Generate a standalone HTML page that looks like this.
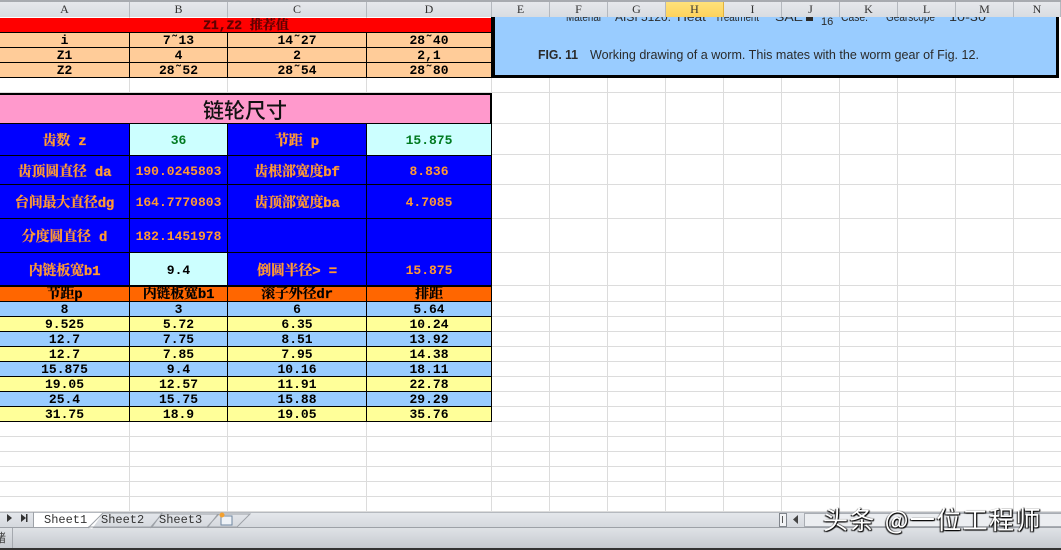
<!DOCTYPE html>
<html><head><meta charset="utf-8"><style>
html,body{margin:0;padding:0;background:#fff;width:1061px;height:550px;overflow:hidden}
body{position:relative;font-family:"Liberation Mono","Noto Serif CJK SC",monospace;font-weight:bold;font-size:13px;color:#000}
.a{position:absolute}
.h{position:absolute;top:2px;height:15px;line-height:15px;background:linear-gradient(#e6e8ec,#d9dce1);border-right:1px solid #b4b8be;text-align:center;font-weight:normal;font-size:12px;color:#333;font-family:"Liberation Serif",serif;box-sizing:border-box}
.r{position:absolute;left:0;width:492px;display:grid;grid-template-columns:130px 98px 139px 125px}
.r>div{box-sizing:border-box;border-right:1px solid #000;border-bottom:1px solid #000;text-align:center;white-space:nowrap;overflow:hidden}
.s{height:15px;line-height:15px;grid-template-rows:15px}
.o>div{background:#ffcc99}.u>div{background:#99ccff}.y>div{background:#ffff99}
.d>div{background:#ff6600;line-height:17px;font-size:14px;letter-spacing:-.2px;-webkit-text-stroke:.2px #000}
.b>div{background:#0000ff;color:#ff9933;display:flex;align-items:center;justify-content:center;padding-top:2px}
.b>div.c{font-size:14px;letter-spacing:-.2px;-webkit-text-stroke:.3px #ff9933;padding-top:1px}
.b>div.l{background:#ccffff;color:#000}
.b>div.g{color:#007a20}
.tab{position:absolute;top:514px;font-weight:normal;font-size:12px;color:#333;line-height:13px}
</style></head><body>
<div class="a" style="left:0;top:0;width:1061px;height:2px;background:#a8abb0"></div>
<div class="h" style="left:0;width:130px">A</div>
<div class="h" style="left:130px;width:98px">B</div>
<div class="h" style="left:228px;width:139px">C</div>
<div class="h" style="left:367px;width:125px">D</div>
<div class="h" style="left:492px;width:58px">E</div>
<div class="h" style="left:550px;width:58px">F</div>
<div class="h" style="left:608px;width:58px">G</div>
<div class="h" style="left:666px;width:58px;background:linear-gradient(#ffe27a,#fdd25c);border-right:1px solid #e2b23c">H</div>
<div class="h" style="left:724px;width:58px">I</div>
<div class="h" style="left:782px;width:58px">J</div>
<div class="h" style="left:840px;width:58px">K</div>
<div class="h" style="left:898px;width:58px">L</div>
<div class="h" style="left:956px;width:58px">M</div>
<div class="h" style="left:1014px;width:47px">N</div>

<svg class="a" style="left:0;top:17px" width="1061" height="496">
<g stroke="#dcdcdc" stroke-width="1" shape-rendering="crispEdges">
<path d="M129.500 0V496M227.500 0V496M366.500 0V496M491.500 0V496M549.500 0V496M607.500 0V496M665.500 0V496M723.500 0V496M781.500 0V496M839.500 0V496M897.500 0V496M955.500 0V496M1013.500 0V496"/>
<path d="M0 75.500H1061M0 106.500H1061M0 137.500H1061M0 167.500H1061M0 201.500H1061M0 235.500H1061M0 268.500H1061M0 284.500H1061M0 299.500H1061M0 314.500H1061M0 329.500H1061M0 344.500H1061M0 359.500H1061M0 374.500H1061M0 389.500H1061M0 404.500H1061M0 419.500H1061M0 434.500H1061M0 449.500H1061M0 464.500H1061M0 479.500H1061M0 494.500H1061"/>
</g></svg>

<div class="a" style="left:0;top:18px;width:492px;height:15px;overflow:hidden;background:#ff0000;line-height:16px;text-align:center;color:#600000;border-bottom:1px solid #000;box-sizing:border-box;-webkit-text-stroke:.3px #600000">Z1,Z2 推荐值</div>
<div class="r s o" style="top:33px"><div>i</div><div>7˜13</div><div>14˜27</div><div>28˜40</div></div>
<div class="r s o" style="top:48px"><div>Z1</div><div>4</div><div>2</div><div>2,1</div></div>
<div class="r s o" style="top:63px"><div>Z2</div><div>28˜52</div><div>28˜54</div><div>28˜80</div></div>

<div class="a" style="left:491px;top:17px;width:568px;height:61px;background:#99ccff;border:solid #000;border-width:0 3px 3px 4px;box-sizing:border-box"></div>
<svg class="a" style="left:495px;top:17px" width="561" height="58">
<g font-family="Liberation Sans,sans-serif" fill="#2a2a2a" font-weight="normal" font-size="12" style="filter:blur(.3px)" lengthAdjust="spacingAndGlyphs">
<text x="71" y="4" textLength="35" lengthAdjust="spacingAndGlyphs">Material</text>
<text x="120" y="4" textLength="56" lengthAdjust="spacingAndGlyphs">AISI 5120.</text>
<text x="182" y="4" textLength="29" lengthAdjust="spacingAndGlyphs">Heat</text>
<text x="220" y="4" textLength="44" lengthAdjust="spacingAndGlyphs">Treatment</text>
<text x="280" y="4" textLength="28" lengthAdjust="spacingAndGlyphs">SAE</text>
<rect x="311" y="0" width="7" height="4" fill="#2a2a2a"/>
<text x="326" y="8" font-size="11">16</text>
<text x="346" y="4" textLength="27" lengthAdjust="spacingAndGlyphs">Case:</text>
<text x="391" y="4" textLength="49" lengthAdjust="spacingAndGlyphs">Gearscope</text>
<text x="454" y="4" textLength="37" lengthAdjust="spacingAndGlyphs">10-30</text>
<text x="43" y="42" font-size="12.500" font-weight="bold" textLength="40" lengthAdjust="spacingAndGlyphs">FIG. 11</text>
<text x="95" y="42" font-size="13" textLength="389" lengthAdjust="spacingAndGlyphs">Working drawing of a worm. This mates with the worm gear of Fig. 12.</text>
</g></svg>

<div class="a" style="left:0;top:93px;width:492px;height:31px;background:#ff99cc;border-top:2px solid #000;border-right:2px solid #000;border-bottom:1px solid #000;box-sizing:border-box;text-align:center;font-size:21px;line-height:30px;color:#111;font-family:'Noto Sans CJK SC',sans-serif;font-weight:500">链轮尺寸</div>

<div class="r b" style="top:124px;height:32px"><div class="c">齿数 z</div><div class="l g">36</div><div class="c">节距 p</div><div class="l g">15.875</div></div>
<div class="r b" style="top:156px;height:29px"><div class="c">齿顶圆直径 da</div><div>190.0245803</div><div class="c">齿根部宽度bf</div><div>8.836</div></div>
<div class="r b" style="top:185px;height:34px"><div class="c">台间最大直径dg</div><div>164.7770803</div><div class="c">齿顶部宽度ba</div><div>4.7085</div></div>
<div class="r b" style="top:219px;height:34px"><div class="c">分度圆直径 d</div><div>182.1451978</div><div></div><div></div></div>
<div class="r b" style="top:253px;height:33px;border-bottom:1px solid #000"><div class="c">内链板宽b1</div><div class="l">9.4</div><div class="c">倒圆半径&gt; =</div><div>15.875</div></div>

<div class="r s d" style="top:287px"><div>节距p</div><div>内链板宽b1</div><div>滚子外径dr</div><div>排距</div></div>
<div class="r s u" style="top:302px"><div>8</div><div>3</div><div>6</div><div>5.64</div></div>
<div class="r s y" style="top:317px"><div>9.525</div><div>5.72</div><div>6.35</div><div>10.24</div></div>
<div class="r s u" style="top:332px"><div>12.7</div><div>7.75</div><div>8.51</div><div>13.92</div></div>
<div class="r s y" style="top:347px"><div>12.7</div><div>7.85</div><div>7.95</div><div>14.38</div></div>
<div class="r s u" style="top:362px"><div>15.875</div><div>9.4</div><div>10.16</div><div>18.11</div></div>
<div class="r s y" style="top:377px"><div>19.05</div><div>12.57</div><div>11.91</div><div>22.78</div></div>
<div class="r s u" style="top:392px"><div>25.4</div><div>15.75</div><div>15.88</div><div>29.29</div></div>
<div class="r s y" style="top:407px"><div>31.75</div><div>18.9</div><div>19.05</div><div>35.76</div></div>

<div class="a" style="left:0;top:512px;width:1061px;height:16px;background:linear-gradient(#e4e7eb,#d5d9de);border-top:1px solid #b5b9bf;border-bottom:1px solid #9da1a7;box-sizing:border-box"></div>
<div class="a" style="left:0;top:528px;width:1061px;height:20px;background:linear-gradient(#dfe2e6,#c6cad0)"></div>
<div class="a" style="left:0;top:548px;width:1061px;height:2px;background:#333"></div>
<div class="a" style="left:12px;top:528px;width:1px;height:20px;background:#a5a9af"></div>
<div class="a" style="left:-6px;top:531px;font-size:12px;font-weight:normal;color:#444;line-height:14px;font-family:'Noto Sans CJK SC',sans-serif">绪</div>

<svg class="a" style="left:0;top:512px" width="260" height="17">
<path d="M33.500 1V15H88L92 17L103 1Z" fill="#fff" stroke="none"/>
<path d="M33.500 0V15M88 16L103 1H162L152 15H88M150 16L162 2H219L207 15H150M207 16L218 2H250L237 15H207" fill="none" stroke="#9da1a7"/>
<path d="M7 2L12 6L7 10ZM21 2L26 6L21 10Z" fill="#333"/><rect x="26" y="2" width="1.500" height="8" fill="#333"/>
<rect x="221" y="4" width="11" height="9" fill="#eef2f7" stroke="#6f86a0"/>
<circle cx="222" cy="3" r="2.500" fill="#f2a030"/>
</svg>
<div class="tab" style="left:44px">Sheet1</div>
<div class="tab" style="left:101px">Sheet2</div>
<div class="tab" style="left:159px">Sheet3</div>

<svg class="a" style="left:778px;top:512px" width="283" height="16">
<rect x="1.500" y="1.500" width="7" height="13" fill="#f2f3f5" stroke="#80858c"/>
<path d="M4.500 4V11" stroke="#555"/>
<path d="M20 3L15 7.500L20 12Z" fill="#444"/>
<rect x="26.500" y="1.500" width="258" height="13" fill="#eceef1" stroke="#a9adb3"/>
</svg>

<div class="a" style="left:823px;top:502px;font-family:'Noto Sans CJK SC',sans-serif;font-weight:normal;font-size:25px;letter-spacing:1.400px;word-spacing:2px;line-height:34px;color:#fff;white-space:nowrap;text-shadow:1px 1px 1px #000,-1px 1px 1px #222,1px 0 1px #333">头条 @一位工程师</div>
</body></html>
